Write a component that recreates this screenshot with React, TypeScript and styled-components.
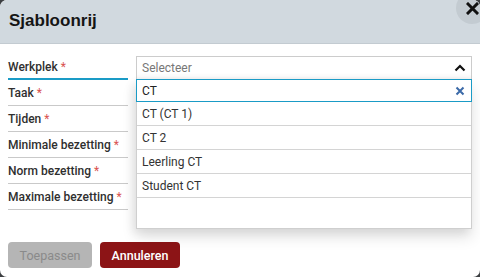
import { createGlobalStyle } from 'styled-components';
import styled from 'styled-components';

const GlobalStyle = createGlobalStyle`
  html, body {
    margin: 0;
    padding: 0;
    background: #3c3f42;
  }
  * { box-sizing: border-box; }
`;

const Dialog = styled.div`
  position: relative;
  width: 480px;
  height: 277px;
  background: #ffffff;
  border-radius: 7px;
  overflow: hidden;
  display: flex;
  flex-direction: column;
  font-family: Roboto, 'Liberation Sans', Arial, sans-serif;
  color: #2b2b2b;
`;

const Header = styled.div`
  position: relative;
  height: 44px;
  flex: none;
  background: #d1d9df;
  border-bottom: 1px solid #c3cbd1;
  display: flex;
  align-items: center;
  padding-left: 9px;
`;

const Title = styled.h1`
  margin: -2px 0 0 0;
  font-family: 'Liberation Sans', Arial, sans-serif;
  font-size: 17px;
  font-weight: 700;
  color: #151515;
`;

const CloseButton = styled.button`
  position: absolute;
  left: 456px;
  top: -8px;
  width: 32px;
  height: 32px;
  border: none;
  border-radius: 50%;
  background: #c3cbd1;
  padding: 0;
  display: flex;
  align-items: center;
  justify-content: center;
  cursor: pointer;
`;

const Body = styled.div`
  display: grid;
  grid-template-columns: 120px 1fr;
  column-gap: 8px;
  padding: 10px 8px 0 8px;
`;

const Labels = styled.div`
  display: flex;
  flex-direction: column;
`;

const LabelRow = styled.div<{ $active?: boolean }>`
  height: 26px;
  display: flex;
  align-items: center;
  white-space: nowrap;
  font-size: 12px;
  font-weight: 500;
  color: #2f2f2f;
  border-bottom: ${p => (p.$active ? '2px solid #1a9bc6' : '1px solid #c9c9c9')};
  padding-top: ${p => (p.$active ? '1px' : '0')};
`;

const Required = styled.span`
  color: #d9534f;
  margin-left: 3px;
  font-weight: 400;
`;

const Field = styled.div`
  position: relative;
  padding-top: 2px;
`;

const SelectBox = styled.div`
  height: 23px;
  border: 1px solid #cccccc;
  border-bottom: none;
  display: flex;
  align-items: center;
  justify-content: space-between;
  padding: 0 5px 0 5px;
  font-size: 12px;
  color: #777777;
  box-shadow: inset 0 -6px 8px -8px rgba(0, 0, 0, 0.15);
`;

const Panel = styled.div`
  position: absolute;
  top: 25px;
  left: 0;
  right: 0;
  height: 150px;
  background: #ffffff;
  border: 1px solid #cfcfcf;
  border-top: none;
  box-shadow: 0 8px 14px rgba(0, 0, 0, 0.12), -4px 4px 8px rgba(0, 0, 0, 0.06);
  display: flex;
  flex-direction: column;
`;

const Search = styled.div`
  height: 23px;
  margin: 0 -1px 0 -1px;
  border: 1px solid #1a9bc6;
  display: flex;
  align-items: center;
  justify-content: space-between;
  padding: 0 6px 0 5px;
  font-size: 12px;
  color: #222222;
`;

const Option = styled.div`
  height: 24px;
  flex: none;
  display: flex;
  align-items: center;
  padding-left: 5px;
  font-size: 12px;
  color: #333333;
  border-bottom: 1px solid #d4d4d4;
`;

const Footer = styled.div`
  margin-top: auto;
  display: flex;
  gap: 8px;
  padding: 0 8px 9px 8px;
`;

const Button = styled.button<{ $variant: 'disabled' | 'danger' }>`
  height: 26px;
  border: none;
  border-radius: 4px;
  font-family: Roboto, 'Liberation Sans', Arial, sans-serif;
  font-size: 12.5px;
  padding: 0;
  background: ${p => (p.$variant === 'danger' ? '#8c1416' : '#b5b5b5')};
  color: ${p => (p.$variant === 'danger' ? '#ffffff' : '#8a8a8a')};
  font-weight: ${p => (p.$variant === 'danger' ? 500 : 400)};
  width: ${p => (p.$variant === 'danger' ? '80px' : '84px')};
`;

const labels = [
  'Werkplek',
  'Taak',
  'Tijden',
  'Minimale bezetting',
  'Norm bezetting',
  'Maximale bezetting',
];

const options = ['CT (CT 1)', 'CT 2', 'Leerling CT', 'Student CT'];

export default function App() {
  return (
    <>
      <GlobalStyle />
      <Dialog>
        <Header>
          <Title>Sjabloonrij</Title>
          <CloseButton aria-label="Sluiten">
            <svg width="13" height="13" viewBox="0 0 13 13">
              <path d="M2 2 L11 11 M11 2 L2 11" stroke="#111" strokeWidth="3" strokeLinecap="square" />
            </svg>
          </CloseButton>
        </Header>
        <Body>
          <Labels>
            {labels.map((l, i) => (
              <LabelRow key={l} $active={i === 0}>
                {l}
                <Required>*</Required>
              </LabelRow>
            ))}
          </Labels>
          <Field>
            <SelectBox>
              Selecteer
              <svg width="12" height="8" viewBox="0 0 12 8">
                <path d="M1.5 6.5 L6 2 L10.5 6.5" stroke="#111" strokeWidth="2.2" fill="none" />
              </svg>
            </SelectBox>
            <Panel>
              <Search>
                CT
                <svg width="10" height="10" viewBox="0 0 10 10">
                  <path d="M1.5 1.5 L8.5 8.5 M8.5 1.5 L1.5 8.5" stroke="#3b6aa8" strokeWidth="2" />
                </svg>
              </Search>
              {options.map(o => (
                <Option key={o}>{o}</Option>
              ))}
            </Panel>
          </Field>
        </Body>
        <Footer>
          <Button $variant="disabled" disabled>Toepassen</Button>
          <Button $variant="danger">Annuleren</Button>
        </Footer>
      </Dialog>
    </>
  );
}
